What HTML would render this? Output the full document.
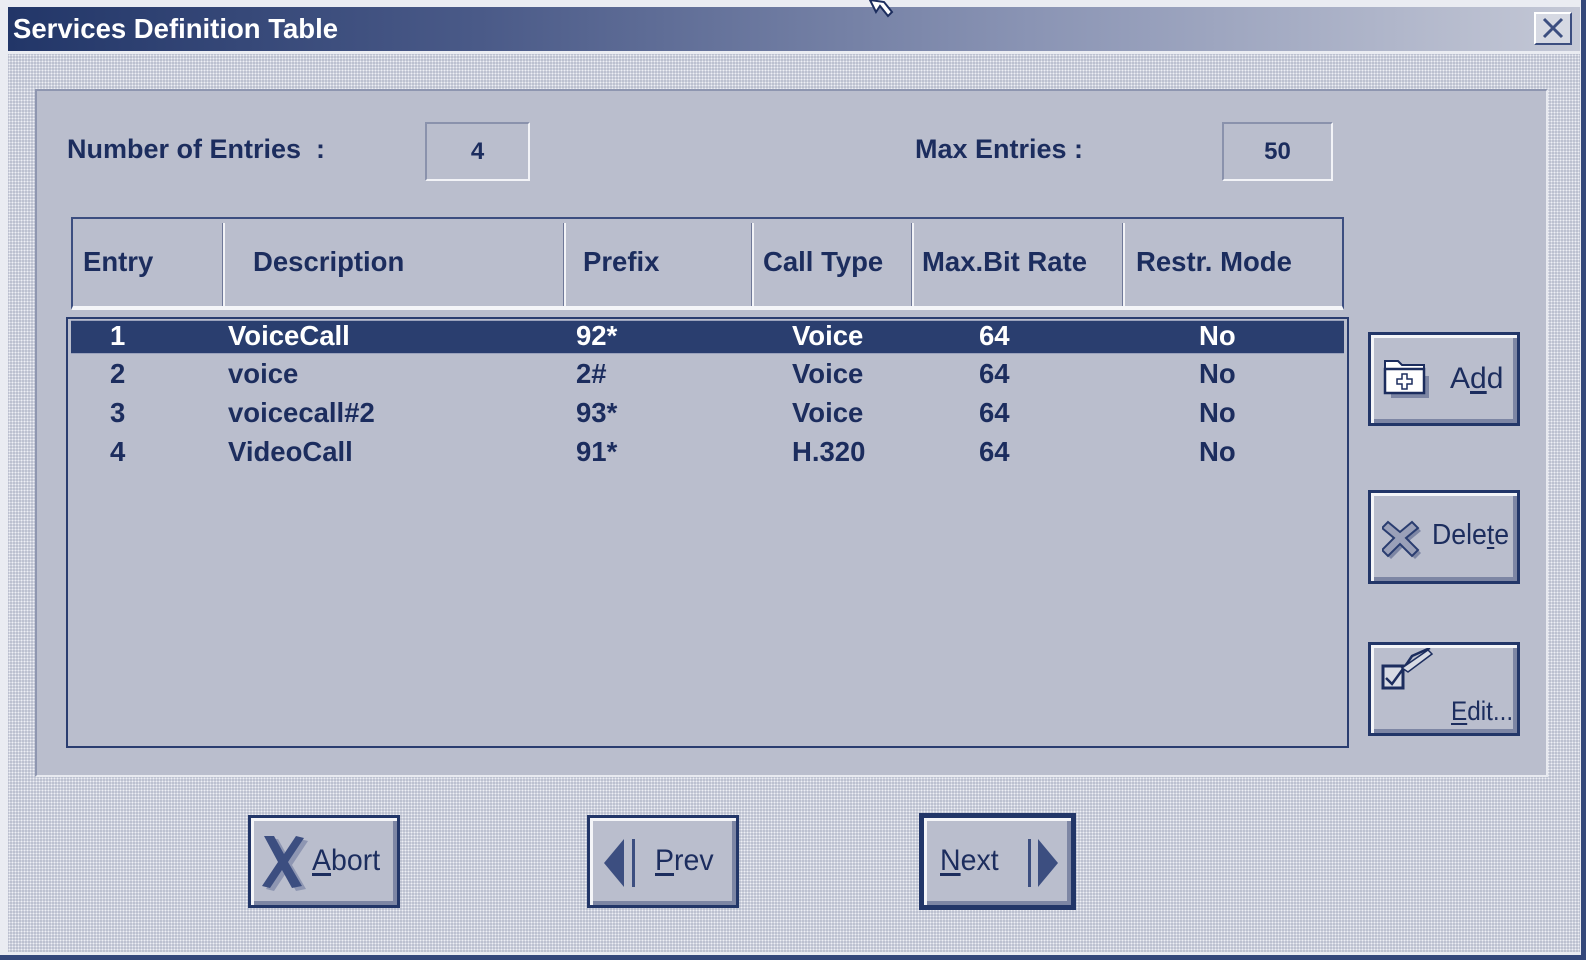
<!DOCTYPE html>
<html><head><meta charset="utf-8"><style>
*{margin:0;padding:0;box-sizing:border-box}
body{width:1586px;height:960px;overflow:hidden;background:#eef0f4;font-family:"Liberation Sans",Arial,sans-serif;position:relative}
.abs{position:absolute}
.win{left:0;top:0;width:1586px;height:960px;background:#eaecf2;border-right:5px solid #34487a;border-bottom:5px solid #34487a}
.dots{left:8px;top:54px;width:1572px;height:898px;background-color:#b4b9ca;
background-image:radial-gradient(circle,#eef0f5 0.9px,transparent 1.3px);background-size:3px 3px}
.title{left:8px;top:7px;width:1572px;height:44px;background:linear-gradient(90deg,#223668 0%,#4a5a88 30%,#8a94b4 65%,#c4c8d6 100%)}
.title span{position:absolute;left:5px;top:6px;color:#fff;font-weight:bold;font-size:27.5px}
.close{left:1534px;top:12px;width:38px;height:33px;background:#d6d9e3;border:2px solid #fff;border-right-color:#3c4e80;border-bottom-color:#3c4e80}
.panel{left:35px;top:89px;width:1513px;height:688px;background:#babecd;border:2px solid #e8eaf0;border-top-color:#8e96b0;border-left-color:#8e96b0}
.lbl{color:#1c2d5e;font-weight:bold;font-size:27px}
.box{background:#babecd;border:2px solid #f2f3f7;border-top-color:#8a92ac;border-left-color:#8a92ac;color:#1c2d5e;font-weight:bold;font-size:24px;text-align:center}
.hdr{left:71px;top:217px;width:1273px;height:93px;border:2px solid #3c4e80;border-bottom:4px solid #f4f5f8;background:#babecd}
.hdr .sep{position:absolute;top:4px;bottom:0;width:3px;background:#f2f3f7;border-left:1px solid #6f7898}
.list{left:66px;top:317px;width:1283px;height:431px;border:2px solid #2a3d70;background:#babecd}
.sel{left:71px;top:320px;width:1273px;height:34px;background:#2a3e6f;border-top:1px solid #9aa2bc;border-bottom:1px solid #9aa2bc}
.t{color:#1c2d5e;font-weight:bold;font-size:27.5px;line-height:30px;white-space:nowrap}
.w{color:#fff}
.btn{background:#babecd;border:3px solid #223668;box-shadow:inset 3px 3px 0 #f4f5f8,inset -4px -4px 0 #7d86a4}
.bl{color:#1c2d5e;font-size:30px;white-space:nowrap}
u{text-decoration:underline;text-underline-offset:3px}
</style></head><body>
<div class="abs win"></div>
<div class="abs dots"></div>
<div class="abs title"><span>Services Definition Table</span></div>
<div class="abs close"><svg width="34" height="29" viewBox="0 0 34 29"><path d="M8 5 L26 23 M26 5 L8 23" stroke="#3c4e80" stroke-width="3"/></svg></div>
<svg class="abs" style="left:868px;top:0" width="30" height="26" viewBox="0 0 30 26"><path d="M2 0 L8 12 L12 6 L20 16 L24 12 L16 2 Z" fill="#fff" stroke="#1c2d5e" stroke-width="2"/></svg>

<div class="abs panel"></div>
<div class="abs lbl" style="left:67px;top:134px">Number of Entries &nbsp;:</div>
<div class="abs box" style="left:425px;top:122px;width:105px;height:59px;line-height:55px">4</div>
<div class="abs lbl" style="left:915px;top:134px">Max Entries :</div>
<div class="abs box" style="left:1222px;top:122px;width:111px;height:59px;line-height:55px">50</div>

<div class="abs hdr">
 <div class="sep" style="left:149px"></div><div class="sep" style="left:490px"></div><div class="sep" style="left:678px"></div><div class="sep" style="left:838px"></div><div class="sep" style="left:1049px"></div>
</div>
<div class="abs t" style="left:83px;top:247px">Entry</div>
<div class="abs t" style="left:253px;top:247px">Description</div>
<div class="abs t" style="left:583px;top:247px">Prefix</div>
<div class="abs t" style="left:763px;top:247px">Call Type</div>
<div class="abs t" style="left:922px;top:247px">Max.Bit Rate</div>
<div class="abs t" style="left:1136px;top:247px">Restr. Mode</div>

<div class="abs list"></div>
<div class="abs sel"></div>
<div class="abs t w" style="left:110px;top:321px">1</div><div class="abs t w" style="left:228px;top:321px">VoiceCall</div><div class="abs t w" style="left:576px;top:321px">92*</div><div class="abs t w" style="left:792px;top:321px">Voice</div><div class="abs t w" style="left:979px;top:321px">64</div><div class="abs t w" style="left:1199px;top:321px">No</div>
<div class="abs t" style="left:110px;top:359px">2</div><div class="abs t" style="left:228px;top:359px">voice</div><div class="abs t" style="left:576px;top:359px">2#</div><div class="abs t" style="left:792px;top:359px">Voice</div><div class="abs t" style="left:979px;top:359px">64</div><div class="abs t" style="left:1199px;top:359px">No</div>
<div class="abs t" style="left:110px;top:398px">3</div><div class="abs t" style="left:228px;top:398px">voicecall#2</div><div class="abs t" style="left:576px;top:398px">93*</div><div class="abs t" style="left:792px;top:398px">Voice</div><div class="abs t" style="left:979px;top:398px">64</div><div class="abs t" style="left:1199px;top:398px">No</div>
<div class="abs t" style="left:110px;top:437px">4</div><div class="abs t" style="left:228px;top:437px">VideoCall</div><div class="abs t" style="left:576px;top:437px">91*</div><div class="abs t" style="left:792px;top:437px">H.320</div><div class="abs t" style="left:979px;top:437px">64</div><div class="abs t" style="left:1199px;top:437px">No</div>

<!-- Add -->
<div class="abs btn" style="left:1368px;top:332px;width:152px;height:94px"></div>
<svg class="abs" style="left:1382px;top:355px" width="50" height="46" viewBox="0 0 50 46"><path d="M6 12 L6 40 L44 40 L44 18 L22 18 L18 12 Z" fill="#7d86a4" transform="translate(3,3)"/><path d="M3 6 L16 6 L20 10 L42 10 L42 16 L3 16 Z" fill="#fff" stroke="#1c2d5e" stroke-width="2"/><path d="M3 14 L42 14 L42 38 L3 38 Z" fill="#fff" stroke="#1c2d5e" stroke-width="2.5"/><path d="M20 19 L25 19 L25 24 L30 24 L30 29 L25 29 L25 34 L20 34 L20 29 L15 29 L15 24 L20 24 Z" fill="#fff" stroke="#1c2d5e" stroke-width="1.5"/></svg>
<div class="abs bl" style="left:1450px;top:362px">A<u>d</u>d</div>
<!-- Delete -->
<div class="abs btn" style="left:1368px;top:490px;width:152px;height:94px"></div>
<svg class="abs" style="left:1382px;top:518px" width="40" height="42" viewBox="0 0 40 42"><path d="M6 4 L18 14 L30 4 L36 10 L24 20 L36 32 L30 38 L18 26 L6 38 L0 32 L12 20 L0 10 Z" fill="#7d86a4" transform="translate(3,3)"/><path d="M6 4 L18 14 L30 4 L36 10 L24 20 L36 32 L30 38 L18 26 L6 38 L0 32 L12 20 L0 10 Z" fill="#9aa0b8" stroke="#2a3d70" stroke-width="2"/></svg>
<div class="abs bl" style="left:1432px;top:519px;font-size:29px;transform:scaleX(0.92);transform-origin:left">Dele<u>t</u>e</div>
<!-- Edit -->
<div class="abs btn" style="left:1368px;top:642px;width:152px;height:94px"></div>
<svg class="abs" style="left:1380px;top:648px" width="62" height="46" viewBox="0 0 62 46"><rect x="3" y="18" width="20" height="22" fill="#d8dbe4" stroke="#1c2d5e" stroke-width="3"/><path d="M6 30 L12 36 L28 14 L32 8 L50 0" fill="none" stroke="#1c2d5e" stroke-width="2.5"/><path d="M22 20 L48 2 L52 6 L28 24 Z" fill="#d8dbe4" stroke="#1c2d5e" stroke-width="1.5"/></svg>
<div class="abs bl" style="left:1451px;top:696px;font-size:27px;transform:scaleX(0.9);transform-origin:left"><u>E</u>dit...</div>

<!-- Abort -->
<div class="abs btn" style="left:248px;top:815px;width:152px;height:93px"></div>
<svg class="abs" style="left:258px;top:832px" width="56" height="60" viewBox="0 0 56 60"><path d="M6 4 L16 4 L26 22 L38 4 L46 6 L30 30 L44 54 L34 56 L24 38 L12 56 L4 54 L20 30 Z" fill="#8e96b2" transform="translate(4,3)"/><path d="M6 4 L16 4 L26 22 L38 4 L46 6 L30 30 L44 54 L34 56 L24 38 L12 56 L4 54 L20 30 Z" fill="#3c4e80"/></svg>
<div class="abs bl" style="left:312px;top:844px;transform:scaleX(0.95);transform-origin:left"><u>A</u>bort</div>
<!-- Prev -->
<div class="abs btn" style="left:587px;top:815px;width:152px;height:93px"></div>
<svg class="abs" style="left:602px;top:835px" width="40" height="56" viewBox="0 0 40 56"><path d="M22 4 L22 52 L2 28 Z" fill="#3c4e80"/><rect x="30" y="4" width="3" height="48" fill="#3c4e80"/></svg>
<div class="abs bl" style="left:655px;top:844px;transform:scaleX(0.95);transform-origin:left"><u>P</u>rev</div>
<!-- Next -->
<div class="abs btn" style="left:919px;top:813px;width:157px;height:97px;border-width:5px"></div>
<div class="abs bl" style="left:940px;top:844px;transform:scaleX(0.95);transform-origin:left"><u>N</u>ext</div>
<svg class="abs" style="left:1024px;top:835px" width="40" height="56" viewBox="0 0 40 56"><rect x="4" y="4" width="3" height="48" fill="#3c4e80"/><path d="M14 4 L14 52 L34 28 Z" fill="#3c4e80"/></svg>
</body></html>
